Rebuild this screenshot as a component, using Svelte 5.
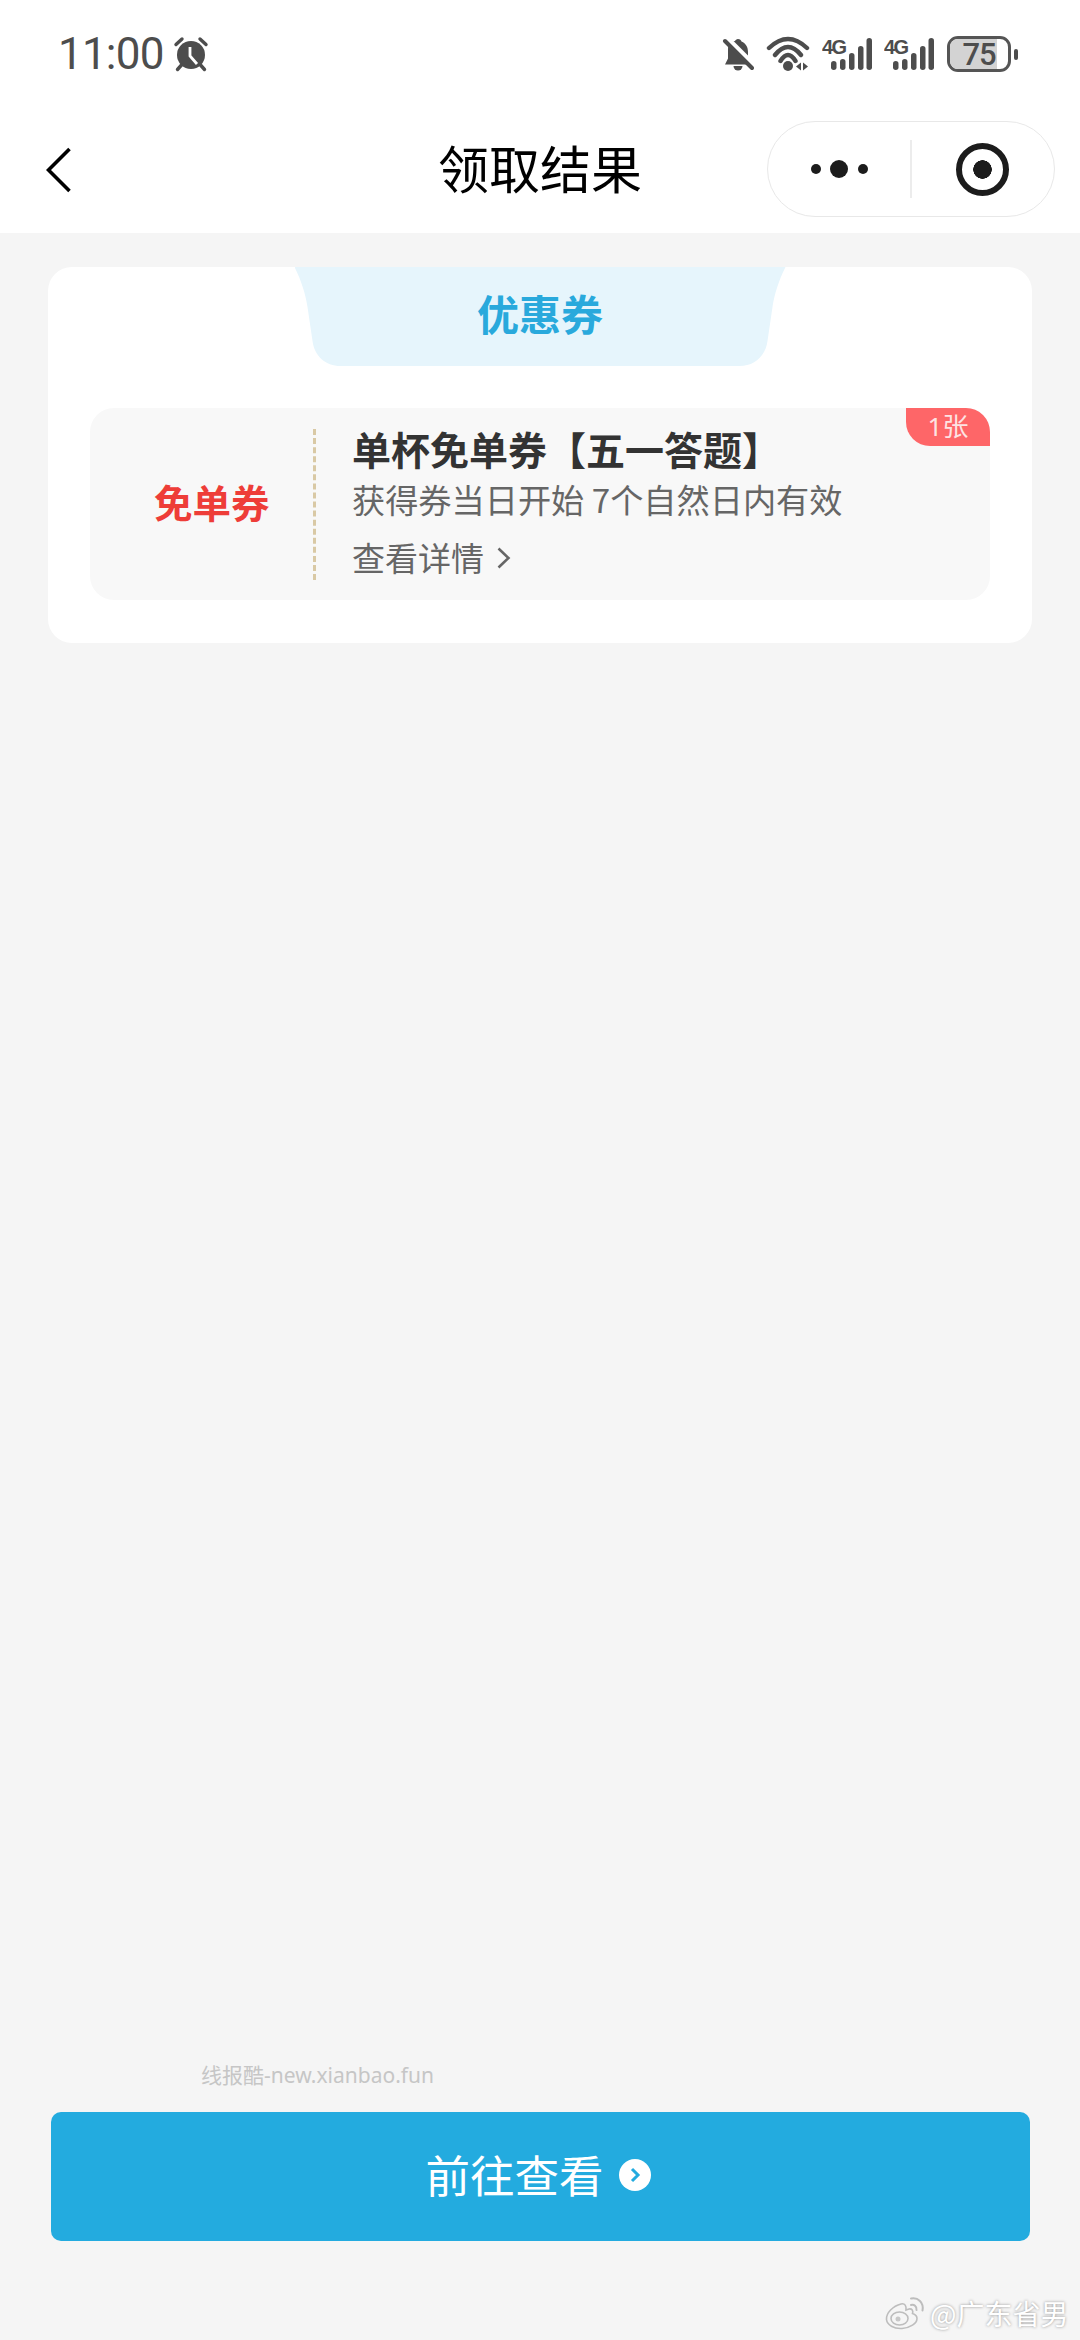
<script lang="ts">
  const signals = [0, 1];
  const bars = [
    { x: 9, h: 9 },
    { x: 18, h: 11 },
    { x: 27, h: 17 },
    { x: 36, h: 24 },
    { x: 44.500, h: 32 }
  ];
</script>

<div class="page">
  <header class="status">
    <div class="clock">
      <span class="time">11:00</span>
      <svg class="alarm" viewBox="0 0 36 36" width="36" height="36">
        <circle cx="18" cy="19" r="14" fill="#4d4d4d" />
        <path d="M3 8.500 9 3M33 8.500 27 3M8.500 29l-4 4.500M27.500 29l4 4.500" stroke="#4d4d4d" stroke-width="3.400" stroke-linecap="round" fill="none" />
        <path d="M17 11v9l7 8" stroke="#fff" stroke-width="2.800" fill="none" />
      </svg>
    </div>
    <div class="indicators">
      <svg viewBox="0 0 32 36" width="32" height="36">
        <path d="M16 3c2 0 3 1 3.500 2.500C24 7.500 26 11 26 16v6l4 6.500H3l3-6v-9C6 8 9 5.500 13 5c.5-1 1.500-2 3-2z" fill="#4d4d4d" />
        <path d="M11.500 30h9a4.500 4.500 0 0 1-9 0z" fill="#4d4d4d" />
        <path d="M5 2 33 30" stroke="#fff" stroke-width="5" />
        <path d="M3 5 30 32" stroke="#4d4d4d" stroke-width="4" stroke-linecap="round" />
      </svg>
      <svg class="wifi" viewBox="0 0 44 36" width="44" height="36">
        <path d="M3 12Q22-6 41 12M9 19Q22 3 35 19M14.500 25Q22 13 29.500 25" stroke="#4d4d4d" stroke-width="4.400" stroke-linecap="round" fill="none" />
        <circle cx="22" cy="30" r="5" fill="#4d4d4d" />
        <path d="M30 30.500l5-4v8zM37 26.500l5 4-5 4z" fill="#4d4d4d" />
      </svg>
      {#each signals as s (s)}
        <svg class="signal" viewBox="0 0 50 36" width="50" height="36">
          <text x="0" y="18" class="net">4G</text>
          {#each bars as bar, i (i)}
            <rect x={bar.x} y={34 - bar.h} width="5.500" height={bar.h} rx="2.750" fill="#4d4d4d" />
          {/each}
        </svg>
      {/each}
      <div class="battery">
        <div class="cell">
          <span class="level"></span>
          <span class="pct">75</span>
        </div>
        <span class="nub"></span>
      </div>
    </div>
  </header>

  <nav class="navbar">
    <svg class="back" viewBox="0 0 26 46" width="26" height="46">
      <path d="M23.500 2 2.500 23l21 21" stroke="#000" stroke-width="3.600" fill="none" />
    </svg>
    <h1>领取结果</h1>
    <div class="capsule">
      <div class="cap-side">
        <span class="dot small"></span>
        <span class="dot big"></span>
        <span class="dot small"></span>
      </div>
      <span class="cap-line"></span>
      <div class="cap-side">
        <span class="target"></span>
      </div>
    </div>
  </nav>

  <main class="content">
    <section class="card">
      <div class="tab">优惠券</div>
      <div class="coupon">
        <span class="badge">1张</span>
        <div class="kind">免单券</div>
        <span class="dash"></span>
        <div class="info">
          <p class="name">单杯免单券【五一答题】</p>
          <p class="rule">获得券当日开始 7个自然日内有效</p>
          <p class="detail">
            查看详情
            <svg viewBox="0 0 16 24" width="16" height="24">
              <path d="M2.500 2.500 12.500 12 2.500 21.500" stroke="#666" stroke-width="2.600" fill="none" />
            </svg>
          </p>
        </div>
      </div>
    </section>

    <div class="spacer"></div>

    <p class="mark">线报酷-new.xianbao.fun</p>
    <button class="go">
      前往查看
      <svg viewBox="0 0 32 32" width="32" height="32">
        <circle cx="16" cy="16" r="16" fill="#fff" />
        <path d="M13 10l6 6-6 6" stroke="#23abdf" stroke-width="3" fill="none" />
      </svg>
    </button>
  </main>

  <div class="weibo">
    <svg viewBox="0 0 40 34" width="40" height="34">
      <path d="M16 8C8 10 1 17 1.500 23.500 2 29 9 33 17 32.500c8-.5 15-5 15-10 0-3-3-4.500-4.500-5 1-3-.5-5-3.500-4.500l-3 1c.5-4-1-7-5-6z" fill="#f5f5f5" stroke="#bdbdbd" stroke-width="1.600" />
      <ellipse cx="14.500" cy="22.500" rx="8.500" ry="6.500" fill="none" stroke="#bdbdbd" stroke-width="1.600" />
      <circle cx="13" cy="23" r="2.500" fill="#c8c8c8" />
      <path d="M26 9c3-1 6 1.500 5.500 5M26 2.500c7-1.500 13 4 11.500 12" stroke="#bdbdbd" stroke-width="2" fill="none" stroke-linecap="round" />
    </svg>
    <span>@广东省男</span>
  </div>
</div>

<style>
  :global(body) {
    margin: 0;
    background: #f5f5f5;
  }

  .page {
    position: relative;
    display: flex;
    flex-direction: column;
    width: 1080px;
    height: 2340px;
    overflow: hidden;
    background: #f5f5f5;
    font-family: "Noto Sans CJK SC", sans-serif;
  }

  .status {
    display: flex;
    justify-content: space-between;
    align-items: center;
    box-sizing: border-box;
    height: 108px;
    padding: 0 62px 0 58px;
    background: #fff;
    color: #4d4d4d;
  }

  .clock {
    display: flex;
    align-items: center;
    gap: 9px;
  }

  .time {
    font-family: Roboto, sans-serif;
    font-size: 44px;
    line-height: 1;
    letter-spacing: -0.800px;
  }

  .indicators {
    display: flex;
    align-items: center;
    gap: 12px;
  }

  .net {
    font-family: "Liberation Sans", sans-serif;
    font-size: 20px;
    font-weight: 700;
    letter-spacing: -1.500px;
    fill: #4d4d4d;
  }

  .battery {
    display: flex;
    align-items: center;
    gap: 3px;
    margin-left: 1px;
  }

  .cell {
    position: relative;
    display: flex;
    justify-content: center;
    align-items: center;
    box-sizing: border-box;
    width: 64px;
    height: 36px;
    border: 3px solid #555;
    border-radius: 11px;
    overflow: hidden;
  }

  .level {
    position: absolute;
    left: 0;
    top: 0;
    bottom: 0;
    width: 47px;
    background: #d3d3d3;
  }

  .pct {
    position: relative;
    font-family: Roboto, sans-serif;
    font-size: 31px;
    font-weight: 500;
    line-height: 1;
    letter-spacing: -1px;
    color: #4d4d4d;
  }

  .nub {
    width: 4px;
    height: 11px;
    border-radius: 2px;
    background: #4d4d4d;
  }

  .navbar {
    position: relative;
    display: flex;
    justify-content: center;
    align-items: center;
    height: 125px;
    background: #fff;
  }

  .back {
    position: absolute;
    left: 46px;
    top: 39px;
  }

  h1 {
    margin: 0 0 6px;
    font-size: 51px;
    font-weight: 400;
    line-height: 1;
    color: #000;
  }

  .capsule {
    position: absolute;
    left: 767px;
    top: 13px;
    display: flex;
    align-items: center;
    box-sizing: border-box;
    width: 288px;
    height: 96px;
    border: 1.500px solid #e8e8e8;
    border-radius: 48px;
  }

  .cap-side {
    flex: 1;
    display: flex;
    justify-content: center;
    align-items: center;
    gap: 9.500px;
  }

  .cap-line {
    width: 1.500px;
    height: 58px;
    background: #ececec;
  }

  .dot {
    border-radius: 50%;
    background: #1c1c1c;
  }

  .dot.small {
    width: 10px;
    height: 10px;
  }

  .dot.big {
    width: 18px;
    height: 18px;
  }

  .target {
    display: block;
    box-sizing: border-box;
    width: 53px;
    height: 53px;
    border: 6.500px solid #1c1c1c;
    border-radius: 50%;
    background: radial-gradient(circle, #1c1c1c 0 9px, #fff 9.500px);
  }

  .content {
    flex: 1;
    display: flex;
    flex-direction: column;
    padding: 34px 48px 99px;
  }

  .card {
    display: flex;
    flex-direction: column;
    align-items: center;
    padding-bottom: 43px;
    border-radius: 24px;
    background: #fff;
  }

  .tab {
    width: 491px;
    height: 99px;
    font-size: 42px;
    font-weight: 700;
    line-height: 91px;
    text-align: center;
    color: #29a9dc;
    background: #e6f5fc;
    clip-path: path("M0 0H491C484 14 480 27 478 40L473 74C471 89 460 99 445 99H46C31 99 20 89 18 74L13 40C11 27 7 14 0 0Z");
  }

  .coupon {
    position: relative;
    display: flex;
    box-sizing: border-box;
    width: 900px;
    height: 192px;
    margin-top: 42px;
    padding: 21px 0 20px 64px;
    border-radius: 24px;
    background: #f8f8f8;
  }

  .badge {
    position: absolute;
    right: 0;
    top: 0;
    width: 84px;
    height: 38px;
    border-radius: 0 24px 0 24px;
    font-family: "Noto Sans", "Noto Sans CJK SC", sans-serif;
    font-size: 26px;
    line-height: 36px;
    text-align: center;
    color: #fde3e3;
    background: #fe6668;
  }

  .kind {
    align-self: center;
    width: 115px;
    padding-bottom: 6px;
    font-size: 38.500px;
    font-weight: 700;
    line-height: 1;
    white-space: nowrap;
    color: #ee3d38;
  }

  .dash {
    width: 0;
    margin-left: 44px;
    border-left: 3px dashed #d9c9a5;
  }

  .info {
    margin-left: 36px;
  }

  .info p {
    margin: 0;
    line-height: 42px;
    white-space: nowrap;
  }

  .info .name {
    margin-top: -2px;
    font-size: 39px;
    font-weight: 700;
    color: #333;
  }

  .info .rule {
    margin-top: 9px;
    font-size: 33.200px;
    color: #666;
  }

  .info .detail {
    display: flex;
    align-items: center;
    gap: 12px;
    margin-top: 16px;
    font-size: 33px;
    color: #666;
  }

  .spacer {
    flex: 1;
  }

  .info .detail svg {
    margin-top: 2px;
  }

  .mark {
    margin: 0 0 23px 153px;
    font-family: "Noto Sans", "Noto Sans CJK SC", sans-serif;
    font-size: 21px;
    line-height: 28px;
    color: #c6c6c6;
  }

  .go {
    display: flex;
    justify-content: center;
    align-items: center;
    gap: 15px;
    box-sizing: border-box;
    width: 979px;
    height: 129px;
    margin-left: 3px;
    padding: 0 5px 6px 0;
    border: none;
    border-radius: 10px;
    font-family: inherit;
    font-size: 44.500px;
    color: #fff;
    background: #23abdf;
  }

  .go svg {
    margin-top: 3px;
  }

  .weibo {
    position: absolute;
    left: 885px;
    top: 2296px;
    display: flex;
    align-items: center;
    gap: 5px;
    font-size: 28px;
    line-height: 34px;
    white-space: nowrap;
    color: #fff;
    text-shadow: 0 0 3px #8f8f8f;
  }
</style>
